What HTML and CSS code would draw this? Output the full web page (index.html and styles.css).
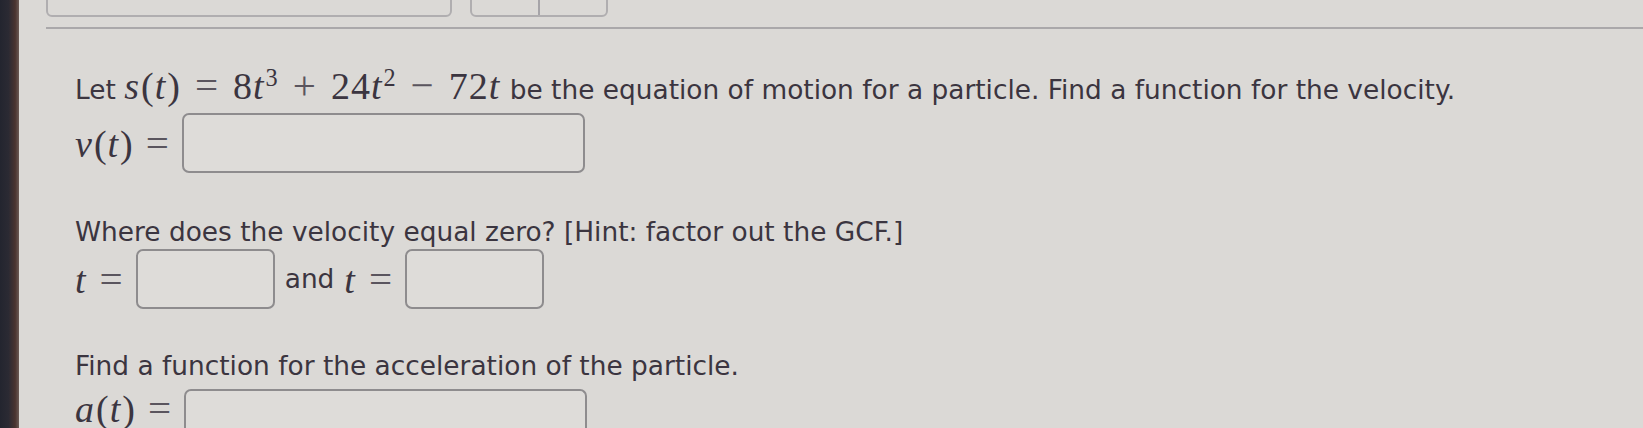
FILE: index.html
```html
<!doctype html>
<html lang="en">
  <head>
    <meta charset="UTF-8" />
    <title>Velocity and acceleration</title>
    <link rel="stylesheet" href="styles.css">
  </head>
  <body>
    <div class="screen">
      <div class="bezel"></div>
      <div class="page">
        <div class="toolbar">
          <div class="tool wide"></div>
          <div class="tool split"><span></span><span></span></div>
        </div>

        <div class="problem">
          <p class="line first">
            Let <span class="math"><i>s</i>(<i>t</i>)<span class="op">=</span>8<i>t</i><sup>3</sup><span class="op">+</span>24<i>t</i><sup>2</sup><span class="op">&minus;</span>72<i>t</i></span>
            be the equation of motion for a particle. Find a function for the velocity.
          </p>
          <div class="answer velocity">
            <span class="math"><i>v</i>(<i>t</i>)<span class="op">=</span></span>
            <div class="box long"></div>
          </div>

          <p class="line gap">Where does the velocity equal zero? [Hint: factor out the GCF.]</p>
          <div class="answer zeros">
            <span class="math"><i>t</i><span class="op">=</span></span>
            <div class="box short"></div>
            <span class="word">and</span>
            <span class="math"><i>t</i><span class="op">=</span></span>
            <div class="box short"></div>
          </div>

          <p class="line gap last">Find a function for the acceleration of the particle.</p>
          <div class="answer accel">
            <span class="math"><i>a</i>(<i>t</i>)<span class="op">=</span></span>
            <div class="box long"></div>
          </div>
        </div>
      </div>
    </div>
  </body>
</html>
```

FILE: styles.css
```css
body {
  margin: 0;
  background: #dbd9d6;
  font-family: "DejaVu Sans", Verdana, sans-serif;
  color: #3b3540;
  overflow: hidden;
}
.screen {
  display: flex;
  height: 428px;
  overflow: hidden;
}
.bezel {
  width: 19px;
  flex: none;
  background: linear-gradient(to right, #23252f 0, #2b2a33 45%, #4a3430 80%, #6b5a55 100%);
}
.page {
  flex: 1;
  padding-left: 27px;
}
.toolbar {
  display: flex;
  gap: 18px;
  height: 27px;
  border-bottom: 2px solid #aaa8aa;
}
.tool {
  height: 30px;
  margin-top: -13px;
  border: 2px solid #b0aeb0;
  border-radius: 6px;
  box-sizing: border-box;
}
.tool.wide {
  width: 406px;
}
.tool.split {
  width: 138px;
  display: flex;
}
.tool.split span {
  flex: 1;
}
.tool.split span + span {
  border-left: 2px solid #a6a4a8;
}
.problem {
  padding-left: 29px;
}
.line {
  margin: 0;
  font-size: 26.4px;
  line-height: 32px;
  white-space: nowrap;
}
.line.first {
  margin-top: 40px;
}
.line.gap {
  margin-top: 42px;
}
.line.gap.last {
  margin-top: 40px;
}
.answer {
  display: flex;
  align-items: center;
  height: 62px;
  font-size: 26.4px;
  line-height: 32px;
}
.answer .op {
  margin: 0 12px;
}
.answer.velocity {
  margin-top: 6px;
}
.answer.zeros {
  margin-top: 0;
}
.answer.accel {
  margin-top: 7px;
  height: 40px;
  align-items: flex-start;
}
.answer.accel .math {
  margin-top: 3px;
}
.answer.accel .box {
  height: 40px;
  border-bottom: 0;
  border-radius: 7px 7px 0 0;
}
.math {
  font-family: "Liberation Serif", "DejaVu Serif", serif;
  font-size: 38px;
  letter-spacing: 1px;
  white-space: nowrap;
}
.math i {
  font-style: italic;
  padding-right: 1px;
}
.math sup {
  font-size: 0.64em;
  line-height: 0;
  vertical-align: 0.52em;
}
.op {
  margin: 0 14px;
  font-size: 1.08em;
  color: #5a555e;
}
.box {
  height: 60px;
  border: 2px solid #8e8c8e;
  border-radius: 7px;
  box-sizing: border-box;
  background: #dedcd9;
}
.box.long {
  width: 403px;
}
.box.short {
  width: 139px;
}
.word {
  margin: 0 10px 0 10px;
}
```
